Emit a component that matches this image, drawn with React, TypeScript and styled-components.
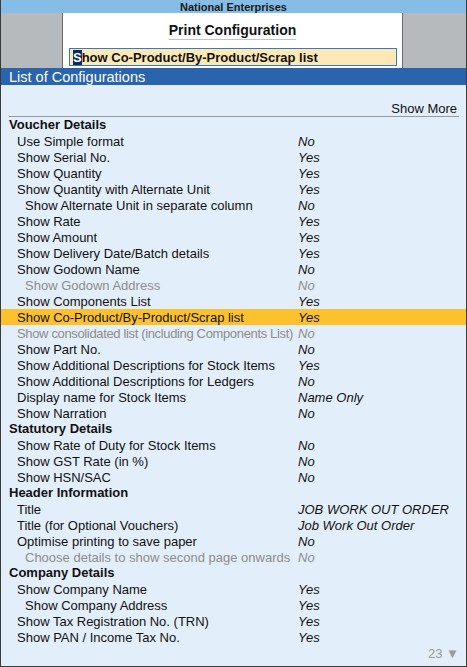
import React from "react";
import styled, { createGlobalStyle } from "styled-components";

const GlobalStyle = createGlobalStyle`
  html, body {
    margin: 0;
    padding: 0;
    background: #ffffff;
  }
  body {
    font-family: "Liberation Sans", Arial, sans-serif;
  }
`;

const Window = styled.div`
  width: 467px;
  height: 667px;
  box-sizing: border-box;
  display: flex;
  flex-direction: column;
  border-left: 1px solid #3a3a3a;
  border-right: 1px solid #3a3a3a;
  border-bottom: 1px solid #3a3a3a;
  font-family: "Liberation Sans", Arial, sans-serif;
  color: #111;
`;

const TitleBar = styled.div`
  height: 13px;
  background: #86bde6;
  display: flex;
  align-items: center;
  justify-content: center;
  font-size: 11px;
  font-weight: bold;
  color: #1a1a1a;
`;

const TopArea = styled.div`
  height: 55px;
  background: #b7babd;
  display: flex;
  padding-left: 61px;
`;

const Panel = styled.div`
  width: 339px;
  background: #ffffff;
  border-left: 1px solid #6b6b6b;
  border-right: 1px solid #6b6b6b;
  display: flex;
  flex-direction: column;
  align-items: center;
`;

const Heading = styled.div`
  margin-top: 9px;
  font-size: 14px;
  font-weight: bold;
  line-height: 17px;
  padding-bottom: 0;
  border-bottom: 1px solid #c4c4c4;
`;

const InputBox = styled.div`
  margin-top: 8px;
  align-self: flex-start;
  margin-left: 6px;
  width: 328px;
  height: 18px;
  box-sizing: border-box;
  background: #fde8b6;
  border: 1px solid #2f7ec4;
  display: flex;
  align-items: center;
  padding-left: 3px;
  font-size: 13px;
  font-weight: bold;
  white-space: nowrap;
`;

const Cursor = styled.span`
  background: #0d2a5a;
  color: #ffffff;
`;

const BlueBar = styled.div`
  height: 17px;
  background: #2a64ac;
  color: #ffffff;
  font-size: 14.5px;
  line-height: 18px;
  padding-left: 8px;
`;

const Body = styled.div`
  flex: 1;
  background: #e2effa;
  display: flex;
  flex-direction: column;
  padding: 16px 7px 0 8px;
  position: relative;
`;

const ShowMore = styled.div`
  height: 15px;
  line-height: 15px;
  text-align: right;
  font-size: 13px;
  padding-right: 2px;
  border-bottom: 1px solid #9a9a9a;
`;

const Row = styled.div<{ $highlight?: boolean }>`
  height: 16px;
  display: flex;
  align-items: center;
  font-size: 13px;
  white-space: nowrap;
  margin: 0 -7px 0 -8px;
  padding-left: 8px;
  background: ${p => (p.$highlight ? "#fcc12c" : "transparent")};
`;

const SectionTitle = styled.div`
  height: 16px;
  line-height: 16px;
  font-size: 13px;
  font-weight: bold;
`;

const Label = styled.span<{ $level: number; $dim?: boolean; $tight?: boolean }>`
  width: ${p => 289 - p.$level * 8}px;
  padding-left: ${p => p.$level * 8}px;
  overflow: hidden;
  letter-spacing: ${p => (p.$tight ? "-0.35px" : "normal")};
  color: ${p => (p.$dim ? "#8c8c8c" : "#111")};
`;

const Value = styled.span<{ $dim?: boolean }>`
  font-style: italic;
  color: ${p => (p.$dim ? "#8c8c8c" : "#111")};
`;

const PageCount = styled.div`
  position: absolute;
  right: 7px;
  bottom: 5px;
  font-size: 13px;
  color: #9a9a9a;
`;

type Item = {
  label: string;
  value?: string;
  level?: number;
  dim?: boolean;
  tight?: boolean;
  section?: boolean;
  highlight?: boolean;
};

const items: Item[] = [
  { label: "Voucher Details", section: true },
  { label: "Use Simple format", value: "No" },
  { label: "Show Serial No.", value: "Yes" },
  { label: "Show Quantity", value: "Yes" },
  { label: "Show Quantity with Alternate Unit", value: "Yes" },
  { label: "Show Alternate Unit in separate column", value: "No", level: 2 },
  { label: "Show Rate", value: "Yes" },
  { label: "Show Amount", value: "Yes" },
  { label: "Show Delivery Date/Batch details", value: "Yes" },
  { label: "Show Godown Name", value: "No" },
  { label: "Show Godown Address", value: "No", level: 2, dim: true },
  { label: "Show Components List", value: "Yes" },
  { label: "Show Co-Product/By-Product/Scrap list", value: "Yes", highlight: true },
  { label: "Show consolidated list (including Components List)", value: "No", dim: true, tight: true },
  { label: "Show Part No.", value: "No" },
  { label: "Show Additional Descriptions for Stock Items", value: "Yes" },
  { label: "Show Additional Descriptions for Ledgers", value: "No" },
  { label: "Display name for Stock Items", value: "Name Only" },
  { label: "Show Narration", value: "No" },
  { label: "Statutory Details", section: true },
  { label: "Show Rate of Duty for Stock Items", value: "No" },
  { label: "Show GST Rate (in %)", value: "No" },
  { label: "Show HSN/SAC", value: "No" },
  { label: "Header Information", section: true },
  { label: "Title", value: "JOB WORK OUT ORDER" },
  { label: "Title (for Optional Vouchers)", value: "Job Work Out Order" },
  { label: "Optimise printing to save paper", value: "No" },
  { label: "Choose details to show second page onwards", value: "No", level: 2, dim: true },
  { label: "Company Details", section: true },
  { label: "Show Company Name", value: "Yes" },
  { label: "Show Company Address", value: "Yes", level: 2 },
  { label: "Show Tax Registration No. (TRN)", value: "Yes" },
  { label: "Show PAN / Income Tax No.", value: "Yes" },
];

const App = () => {
  return (
    <>
      <GlobalStyle />
      <Window>
        <TitleBar>National Enterprises</TitleBar>
        <TopArea>
          <Panel>
            <Heading>Print Configuration</Heading>
            <InputBox>
              <Cursor>S</Cursor>how Co-Product/By-Product/Scrap list
            </InputBox>
          </Panel>
        </TopArea>
        <BlueBar>List of Configurations</BlueBar>
        <Body>
          <ShowMore>Show More</ShowMore>
          {items.map((it, i) =>
            it.section ? (
              <SectionTitle key={i}>{it.label}</SectionTitle>
            ) : (
              <Row key={i} $highlight={it.highlight}>
                <Label $level={it.level ?? 1} $dim={it.dim} $tight={it.tight}>
                  {it.label}
                </Label>
                <Value $dim={it.dim}>{it.value}</Value>
              </Row>
            )
          )}
          <PageCount>23 ▼</PageCount>
        </Body>
      </Window>
    </>
  );
};

export default App;
